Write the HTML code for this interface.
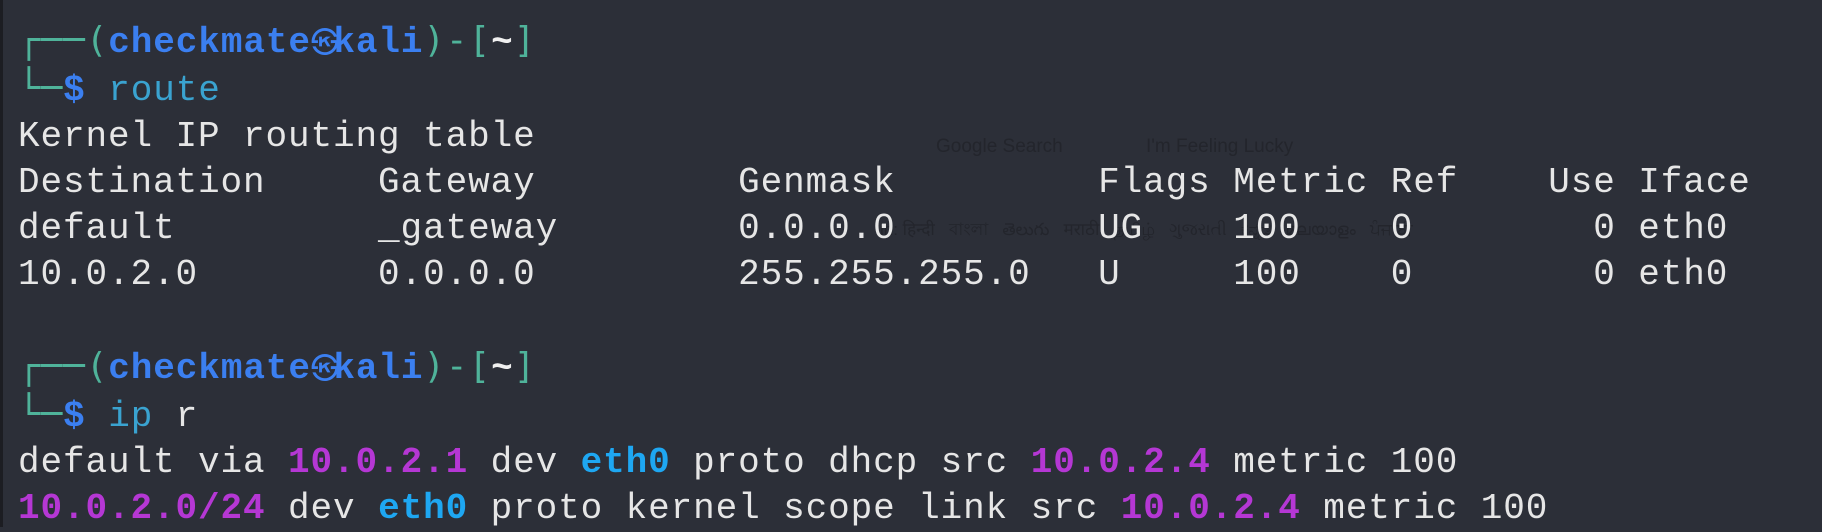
<!DOCTYPE html>
<html><head><meta charset="utf-8">
<style>
html,body{margin:0;padding:0;}
body{width:1822px;height:527px;background:#2c2f38;overflow:hidden;position:relative;}
.stripe{position:absolute;left:0;top:0;width:3px;height:527px;background:#1c1d22;}
.ghost{position:absolute;font-family:"Liberation Sans",sans-serif;color:#23252c;font-size:19px;}
pre{position:absolute;left:18px;top:18px;margin:0;font-family:"Liberation Mono","DejaVu Sans Mono","Noto Sans CJK JP",monospace;font-size:36px;letter-spacing:0.9px;line-height:46px;color:#e6e6e6;}
.g{color:#4fb39a;font-family:"DejaVu Sans Mono","Liberation Mono",monospace;}
.b{color:#3b7ff0;font-weight:bold;}
.c{color:#3aa3d0;}
.p{color:#b537d4;font-weight:bold;}
.e{color:#1ea7f2;font-weight:bold;}
.w{color:#f0f0f0;font-weight:bold;}
.k{font-family:"Noto Sans CJK JP","DejaVu Sans",sans-serif;font-size:28px;letter-spacing:0;display:inline-block;width:22.5px;}
</style></head><body>
<div class="stripe"></div>
<div class="ghost" style="left:936px;top:136px">Google Search</div>
<div class="ghost" style="left:1146px;top:136px">I'm Feeling Lucky</div>
<div class="ghost" style="left:880px;top:217px;font-size:17px">in: हिन्दी &nbsp; বাংলা &nbsp; తెలుగు &nbsp; मराठी &nbsp; தமிழ் &nbsp; ગુજરાતી &nbsp; ಕನ್ನಡ &nbsp; മലയാളം &nbsp; ਪੰਜਾਬੀ</div>
<pre><span class="g">┌──(</span><span class="b">checkmate<span class="k">㉿</span>kali</span><span class="g">)-[</span><span class="w">~</span><span class="g">]</span>
<span class="g">└─</span><span class="b">$</span> <span class="c">route</span>
Kernel IP routing table
Destination     Gateway         Genmask         Flags Metric Ref    Use Iface
default         _gateway        0.0.0.0         UG    100    0        0 eth0
10.0.2.0        0.0.0.0         255.255.255.0   U     100    0        0 eth0

<span class="g">┌──(</span><span class="b">checkmate<span class="k">㉿</span>kali</span><span class="g">)-[</span><span class="w">~</span><span class="g">]</span>
<span class="g">└─</span><span class="b">$</span> <span class="c">ip</span> r
default via <span class="p">10.0.2.1</span> dev <span class="e">eth0</span> proto dhcp src <span class="p">10.0.2.4</span> metric 100
<span class="p">10.0.2.0/24</span> dev <span class="e">eth0</span> proto kernel scope link src <span class="p">10.0.2.4</span> metric 100</pre>
</body></html>
